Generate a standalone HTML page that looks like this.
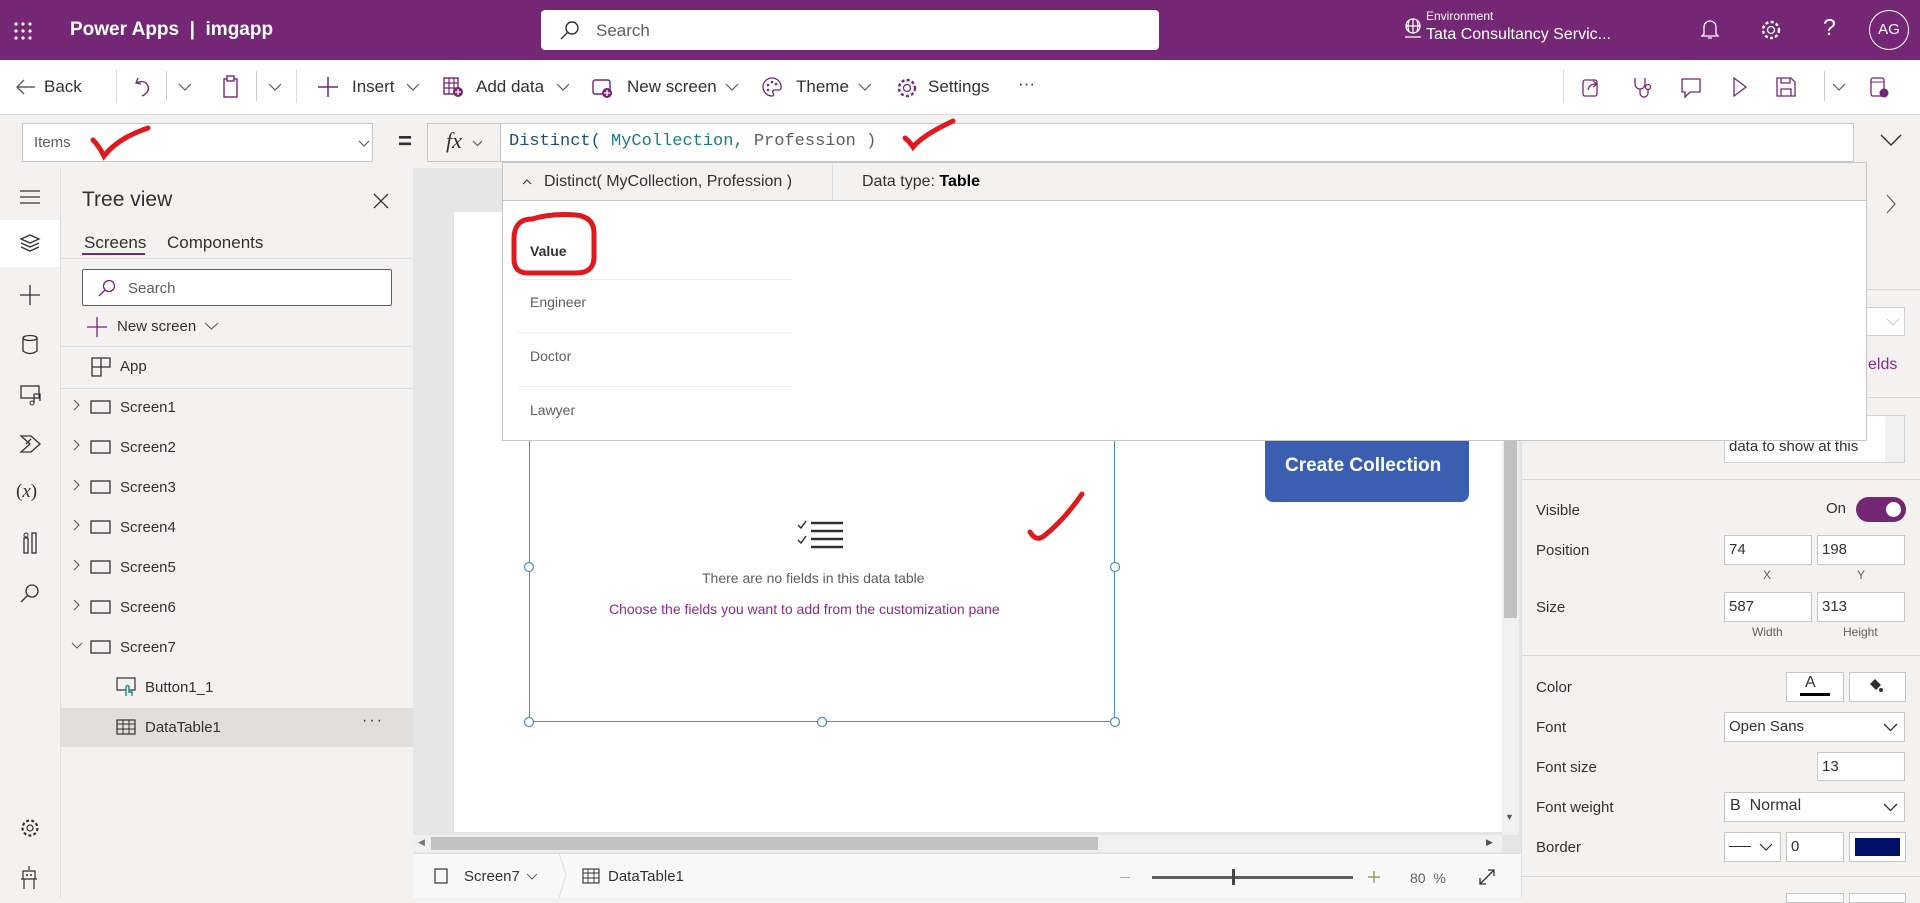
<!DOCTYPE html>
<html><head><meta charset="utf-8"><style>
*{box-sizing:border-box;margin:0;padding:0}
body{width:1920px;height:898px;overflow:hidden;position:relative;font-family:"Liberation Sans",sans-serif;color:#323130;background:#f3f2f1}
.a{position:absolute}
.t{position:absolute;white-space:nowrap}
svg{position:absolute;overflow:visible}
.box{position:absolute;background:#fff;border:1px solid #c8c6c4}
.lbl{position:absolute;left:1536px;font-size:15px;color:#323130}
.sep{position:absolute;height:1px;background:#d6d6d6}
.pop{position:absolute;left:0;top:0;width:1920px;height:898px;z-index:5;pointer-events:none}
.red{z-index:6}
</style></head><body>
<!-- header -->
<div class="a" style="left:0;top:0;width:1920px;height:60px;background:#742774"></div>
<svg style="left:14px;top:22px" width="20" height="18"><g fill="#fff"><circle cx="2" cy="2" r="1.6"/><circle cx="9" cy="2" r="1.6"/><circle cx="16" cy="2" r="1.6"/><circle cx="2" cy="9" r="1.6"/><circle cx="9" cy="9" r="1.6"/><circle cx="16" cy="9" r="1.6"/><circle cx="2" cy="16" r="1.6"/><circle cx="9" cy="16" r="1.6"/><circle cx="16" cy="16" r="1.6"/></g></svg>
<div class="t" style="left:70px;top:19px;font-size:19px;color:#fff;font-weight:bold">Power Apps &nbsp;|&nbsp; imgapp</div>
<div class="a" style="left:541px;top:10px;width:618px;height:40px;background:#fff;border-radius:4px"></div>
<svg style="left:560px;top:20px" width="20" height="20"><circle cx="12" cy="8" r="6" fill="none" stroke="#323130" stroke-width="1.4"/><line x1="8" y1="12" x2="1" y2="19" stroke="#323130" stroke-width="1.4"/></svg>
<div class="t" style="left:596px;top:21px;font-size:17px;color:#605e5c">Search</div>
<svg style="left:1403px;top:17px" width="20" height="22"><circle cx="10" cy="9" r="7" fill="none" stroke="#fff" stroke-width="1.3"/><path d="M3 9h14M10 2v14M6 4q-2 5 0 10M14 4q2 5 0 10M2 20h16" fill="none" stroke="#fff" stroke-width="1.2"/></svg>
<div class="t" style="left:1426px;top:9px;font-size:12px;color:#fff">Environment</div>
<div class="t" style="left:1426px;top:26px;font-size:16px;color:#fff">Tata Consultancy Servic...</div>
<svg style="left:1700px;top:19px" width="20" height="22"><path d="M4 15V8a6 6 0 0 1 12 0v7l2 2H2z M8 19h4" fill="none" stroke="#fff" stroke-width="1.3"/></svg>
<svg style="left:1760px;top:19px" width="22" height="22"><circle cx="11" cy="11" r="3.5" fill="none" stroke="#fff" stroke-width="1.3"/><circle cx="11" cy="11" r="8" fill="none" stroke="#fff" stroke-width="2.4" stroke-dasharray="3 2.3"/></svg>
<div class="t" style="left:1823px;top:14px;font-size:23px;color:#fff">?</div>
<div class="a" style="left:1869px;top:10px;width:40px;height:40px;border:1.5px solid #fff;border-radius:50%;color:#fff;font-size:15px;text-align:center;line-height:37px">AG</div>
<!-- toolbar -->
<div class="a" style="left:0;top:60px;width:1920px;height:55px;background:#fff;border-bottom:1px solid #dcdcdc"></div>
<div style="position:absolute;top:77px;font-size:17px;color:#323130">
<svg style="left:16px;top:2px" width="20" height="16"><path d="M19 8H2M8 1L1 8l7 7" fill="none" stroke="#605e5c" stroke-width="1.4"/></svg>
<div class="t" style="left:44px;top:0">Back</div>
<div class="a" style="left:116px;top:-8px;width:1px;height:34px;background:#ddd"></div>
<svg style="left:134px;top:0" width="18" height="20"><path d="M4 1L2 6l5 1M2 6q9-4 12 3q2 6-6 10" fill="none" stroke="#742774" stroke-width="1.4"/></svg>
<div class="a" style="left:166px;top:-6px;width:1px;height:30px;background:#ccc"></div>
<svg style="left:178px;top:6px" width="14" height="8"><path d="M1 1l6 6 6-6" fill="none" stroke="#605e5c" stroke-width="1.2"/></svg>
<svg style="left:222px;top:-2px" width="18" height="24"><rect x="2" y="4" width="13" height="18" fill="none" stroke="#742774" stroke-width="1.4"/><rect x="5" y="1" width="7" height="5" fill="#fff" stroke="#742774" stroke-width="1.4"/></svg>
<div class="a" style="left:256px;top:-6px;width:1px;height:30px;background:#ccc"></div>
<svg style="left:268px;top:6px" width="14" height="8"><path d="M1 1l6 6 6-6" fill="none" stroke="#605e5c" stroke-width="1.2"/></svg>
<div class="a" style="left:296px;top:-8px;width:1px;height:34px;background:#ddd"></div>
<svg style="left:318px;top:0" width="20" height="20"><path d="M10 0v20M0 10h20" stroke="#742774" stroke-width="1.5"/></svg>
<div class="t" style="left:352px;top:0">Insert</div>
<svg style="left:406px;top:6px" width="14" height="8"><path d="M1 1l6 6 6-6" fill="none" stroke="#605e5c" stroke-width="1.2"/></svg>
<svg style="left:443px;top:0" width="22" height="22"><rect x="1" y="1" width="14" height="16" fill="none" stroke="#742774" stroke-width="1.4"/><path d="M1 6h14M1 11h14M6 1v16M11 1v16" stroke="#742774" stroke-width="1.2"/><circle cx="15" cy="15" r="5" fill="#742774"/><path d="M15 12v6M12 15h6" stroke="#fff" stroke-width="1.3"/></svg>
<div class="t" style="left:476px;top:0">Add data</div>
<svg style="left:556px;top:6px" width="14" height="8"><path d="M1 1l6 6 6-6" fill="none" stroke="#605e5c" stroke-width="1.2"/></svg>
<svg style="left:592px;top:1px" width="22" height="22"><rect x="1" y="2" width="17" height="14" rx="2" fill="none" stroke="#742774" stroke-width="1.4"/><circle cx="15" cy="15" r="5" fill="#742774"/><path d="M15 12v6M12 15h6" stroke="#fff" stroke-width="1.3"/></svg>
<div class="t" style="left:627px;top:0">New screen</div>
<svg style="left:725px;top:6px" width="14" height="8"><path d="M1 1l6 6 6-6" fill="none" stroke="#605e5c" stroke-width="1.2"/></svg>
<svg style="left:762px;top:0" width="20" height="20"><path d="M10 1a9 9 0 1 0 0 18c2 0 2-2 1-3s0-3 2-3h4a2 2 0 0 0 2-2A9 9 0 0 0 10 1z" fill="none" stroke="#742774" stroke-width="1.3"/><circle cx="6" cy="8" r="1.3" fill="#742774"/><circle cx="10" cy="5" r="1.3" fill="#742774"/><circle cx="14" cy="7" r="1.3" fill="#742774"/><circle cx="6" cy="13" r="1.3" fill="#742774"/></svg>
<div class="t" style="left:796px;top:0">Theme</div>
<svg style="left:858px;top:6px" width="14" height="8"><path d="M1 1l6 6 6-6" fill="none" stroke="#605e5c" stroke-width="1.2"/></svg>
<svg style="left:896px;top:0" width="22" height="22"><circle cx="11" cy="11" r="3.5" fill="none" stroke="#742774" stroke-width="1.3"/><circle cx="11" cy="11" r="8" fill="none" stroke="#742774" stroke-width="2.4" stroke-dasharray="3 2.3"/></svg>
<div class="t" style="left:928px;top:0">Settings</div>
<div class="t" style="left:1018px;top:-3px">···</div>
<div class="a" style="left:1563px;top:-8px;width:1px;height:34px;background:#ddd"></div>
<svg style="left:1582px;top:0" width="20" height="20"><rect x="1" y="3" width="14" height="16" rx="2" fill="none" stroke="#742774" stroke-width="1.3"/><path d="M6 13q1-6 8-6M11 4l4 3-4 3" fill="none" stroke="#742774" stroke-width="1.3"/></svg>
<svg style="left:1633px;top:0" width="20" height="22"><path d="M2 1v6a5 5 0 0 0 10 0V1M7 12v4a4 4 0 0 0 8 0v-3" fill="none" stroke="#742774" stroke-width="1.3"/><circle cx="15" cy="10" r="2.5" fill="none" stroke="#742774" stroke-width="1.3"/></svg>
<svg style="left:1680px;top:0" width="22" height="22"><path d="M2 2h18v13H10l-5 5v-5H2z" fill="none" stroke="#742774" stroke-width="1.3"/></svg>
<svg style="left:1732px;top:0" width="16" height="20"><path d="M2 1l12 9-12 9z" fill="none" stroke="#742774" stroke-width="1.3"/></svg>
<svg style="left:1776px;top:0" width="20" height="20"><path d="M1 1h14l4 4v14H1z M5 1v5h9V1 M5 19v-7h10v7" fill="none" stroke="#742774" stroke-width="1.3"/></svg>
<div class="a" style="left:1824px;top:-6px;width:1px;height:30px;background:#ccc"></div>
<svg style="left:1832px;top:6px" width="14" height="8"><path d="M1 1l6 6 6-6" fill="none" stroke="#605e5c" stroke-width="1.2"/></svg>
<svg style="left:1870px;top:0" width="20" height="22"><rect x="1" y="1" width="13" height="18" rx="2" fill="none" stroke="#742774" stroke-width="1.3"/><path d="M1 5h13" stroke="#742774"/><circle cx="14" cy="16" r="4.5" fill="#742774"/></svg>
</div>
<!-- formula bar -->
<div class="box" style="left:22px;top:123px;width:351px;height:39px"></div>
<div class="t" style="left:34px;top:134px;font-size:15px;color:#605e5c">Items</div>
<svg style="left:358px;top:140px" width="12" height="7"><path d="M1 1l5 5 5-5" fill="none" stroke="#605e5c" stroke-width="1.2"/></svg>
<div class="t" style="left:398px;top:128px;font-size:24px;font-weight:bold">=</div>
<div class="box" style="left:427px;top:123px;width:74px;height:39px;background:#f3f2f1"></div>
<div class="t" style="left:446px;top:128px;font-size:22px;font-family:'Liberation Serif',serif;font-style:italic">fx</div>
<svg style="left:472px;top:140px" width="11" height="7"><path d="M1 1l4.5 4.5L10 1" fill="none" stroke="#605e5c" stroke-width="1.2"/></svg>
<div class="box" style="left:500px;top:123px;width:1354px;height:39px"></div>
<div class="t" style="left:509px;top:132px;font-size:17px;font-family:'Liberation Mono',monospace;color:#605e5c"><span style="color:#1f4e79">Distinct(</span> <span style="color:#1b7c83">MyCollection,</span> Profession )</div>
<svg style="left:1880px;top:134px" width="22" height="13"><path d="M1 1l10 10L21 1" fill="none" stroke="#323130" stroke-width="1.4"/></svg>
<!-- left rail -->
<div class="a" style="left:0;top:168px;width:61px;height:730px;background:#f3f2f1;border-right:1px solid #e1dfdd"></div>
<div class="a" style="left:0;top:220px;width:60px;height:47px;background:#fff"></div>
<svg style="left:20px;top:190px" width="20" height="14"><path d="M0 1h20M0 7h20M0 13h20" stroke="#323130" stroke-width="1.2"/></svg>
<svg style="left:20px;top:234px" width="20" height="18"><path d="M10 1l9 4-9 4-9-4z M1 9l9 4 9-4 M1 13l9 4 9-4" fill="none" stroke="#323130" stroke-width="1.3"/></svg>
<svg style="left:20px;top:285px" width="20" height="20"><path d="M10 0v20M0 10h20" stroke="#323130" stroke-width="1.3"/></svg>
<svg style="left:22px;top:335px" width="16" height="20"><ellipse cx="8" cy="3" rx="7" ry="2.5" fill="none" stroke="#323130" stroke-width="1.3"/><path d="M1 3v13q7 5 14 0V3" fill="none" stroke="#323130" stroke-width="1.3"/></svg>
<svg style="left:20px;top:385px" width="22" height="20"><rect x="1" y="1" width="18" height="12" fill="none" stroke="#323130" stroke-width="1.3"/><path d="M14 9v9M14 9h6v7" fill="none" stroke="#323130" stroke-width="1.3"/><circle cx="12" cy="18" r="2" fill="none" stroke="#323130"/></svg>
<svg style="left:20px;top:435px" width="22" height="18"><path d="M1 1h10l9 8-9 8H1l9-8z M6 9l5-5" fill="none" stroke="#323130" stroke-width="1.3"/></svg>
<div class="t" style="left:16px;top:481px;font-size:19px;font-family:'Liberation Serif',serif">(<i>x</i>)</div>
<svg style="left:22px;top:532px" width="16" height="22"><rect x="2" y="6" width="4" height="15" fill="none" stroke="#323130" stroke-width="1.3"/><rect x="10" y="1" width="4" height="20" fill="none" stroke="#323130" stroke-width="1.3"/><circle cx="4" cy="3" r="2" fill="none" stroke="#323130"/></svg>
<svg style="left:20px;top:583px" width="20" height="20"><circle cx="12" cy="8" r="6" fill="none" stroke="#323130" stroke-width="1.3"/><line x1="8" y1="12" x2="1" y2="19" stroke="#323130" stroke-width="1.3"/></svg>
<svg style="left:20px;top:818px" width="20" height="20"><circle cx="10" cy="10" r="3" fill="none" stroke="#323130" stroke-width="1.2"/><circle cx="10" cy="10" r="7.5" fill="none" stroke="#323130" stroke-width="2.2" stroke-dasharray="3 2.2"/></svg>
<svg style="left:20px;top:866px" width="18" height="24"><path d="M9 0v4M3 5h12v8H3z M1 13h16M4 13v10M14 13v10" fill="none" stroke="#323130" stroke-width="1.2"/><circle cx="7" cy="9" r="1" fill="#323130"/><circle cx="11" cy="9" r="1" fill="#323130"/></svg>
<!-- tree panel -->
<div class="a" style="left:61px;top:168px;width:352px;height:730px;background:#f3f2f1"></div>
<div class="t" style="left:82px;top:188px;font-size:21px;color:#323130">Tree view</div>
<svg style="left:373px;top:193px" width="16" height="16"><path d="M1 1l14 14M15 1L1 15" stroke="#323130" stroke-width="1.3"/></svg>
<div class="t" style="left:84px;top:233px;font-size:17px">Screens</div>
<div class="a" style="left:82px;top:253px;width:63px;height:2px;background:#742774"></div>
<div class="t" style="left:167px;top:233px;font-size:17px;color:#323130">Components</div>
<div class="sep" style="left:61px;top:258px;width:352px;background:#dcdcdc"></div>
<div class="a" style="left:82px;top:269px;width:310px;height:37px;background:#fff;border:1px solid #605e5c;border-radius:2px"></div>
<svg style="left:98px;top:279px" width="18" height="18"><circle cx="11" cy="7" r="5.5" fill="none" stroke="#742774" stroke-width="1.3"/><line x1="7" y1="11" x2="1" y2="17" stroke="#742774" stroke-width="1.3"/></svg>
<div class="t" style="left:128px;top:280px;font-size:15px;color:#605e5c">Search</div>
<svg style="left:87px;top:317px" width="20" height="20"><path d="M10 0v20M0 10h20" stroke="#742774" stroke-width="1.3"/></svg>
<div class="t" style="left:117px;top:318px;font-size:15px">New screen</div>
<svg style="left:204px;top:322px" width="15" height="8"><path d="M1 1l6.5 6L14 1" fill="none" stroke="#605e5c" stroke-width="1.1"/></svg>
<div class="sep" style="left:61px;top:346px;width:352px;background:#dcdcdc"></div>
<svg style="left:91px;top:357px" width="20" height="20"><path d="M1 1h18v9H10v9H1z M10 1v9M1 10h9" fill="none" stroke="#323130" stroke-width="1.3"/></svg>
<div class="t" style="left:120px;top:358px;font-size:15px">App</div>
<div class="sep" style="left:61px;top:388px;width:352px;background:#dcdcdc"></div>
<div style="position:absolute;left:0;top:0;font-size:15px">
<div class="t" style="left:120px;top:399px">Screen1</div><div class="t" style="left:120px;top:439px">Screen2</div><div class="t" style="left:120px;top:479px">Screen3</div><div class="t" style="left:120px;top:519px">Screen4</div><div class="t" style="left:120px;top:559px">Screen5</div><div class="t" style="left:120px;top:599px">Screen6</div><div class="t" style="left:120px;top:639px">Screen7</div>
</div>
<svg style="left:72px;top:400px" width="60" height="260"><g fill="none" stroke="#605e5c" stroke-width="1.1"><path d="M2 0l5 5-5 5M2 40l5 5-5 5M2 80l5 5-5 5M2 120l5 5-5 5M2 160l5 5-5 5M2 200l5 5-5 5M0 243l5 5 5-5"/></g><g fill="none" stroke="#323130" stroke-width="1.3"><rect x="19" y="1" width="19" height="12"/><rect x="19" y="41" width="19" height="12"/><rect x="19" y="81" width="19" height="12"/><rect x="19" y="121" width="19" height="12"/><rect x="19" y="161" width="19" height="12"/><rect x="19" y="201" width="19" height="12"/><rect x="19" y="241" width="19" height="12"/></g></svg>
<svg style="left:116px;top:677px" width="22" height="20"><rect x="1" y="1" width="18" height="12" fill="none" stroke="#323130" stroke-width="1.2"/><path d="M10 19v-9a1.5 1.5 0 0 1 3 0v5h3v4" fill="#f3f2f1" stroke="#1b8a8a" stroke-width="1.4"/></svg>
<div class="t" style="left:145px;top:679px;font-size:15px">Button1_1</div>
<div class="a" style="left:61px;top:708px;width:352px;height:39px;background:#e1dfdd"></div>
<svg style="left:116px;top:719px" width="20" height="16"><rect x="1" y="1" width="18" height="14" fill="none" stroke="#323130" stroke-width="1.2"/><path d="M1 5h18M1 10h18M7 1v14M13 1v14" stroke="#323130" stroke-width="1"/></svg>
<div class="t" style="left:145px;top:719px;font-size:15px">DataTable1</div>
<div class="t" style="left:362px;top:712px;font-size:16px;letter-spacing:2px">···</div>
<!-- canvas area -->
<div class="a" style="left:413px;top:168px;width:1108px;height:689px;background:#e6e6e6"></div>
<div class="a" style="left:454px;top:212px;width:1048px;height:620px;background:#fff"></div>
<div class="a" style="left:1502px;top:168px;width:17px;height:667px;background:#f0f0f0"></div>
<div class="a" style="left:1504px;top:416px;width:13px;height:202px;background:#c1c1c1"></div>
<div class="t" style="left:1505px;top:812px;font-size:9px;color:#555">▼</div>
<div class="a" style="left:413px;top:835px;width:1089px;height:17px;background:#f0f0f0"></div>
<div class="a" style="left:431px;top:837px;width:667px;height:13px;background:#c1c1c1"></div>
<div class="t" style="left:418px;top:837px;font-size:9px;color:#777">◀</div>
<div class="t" style="left:1486px;top:837px;font-size:9px;color:#555">▶</div>
<div class="a" style="left:413px;top:853px;width:1108px;height:45px;background:#f8f8f8;border-top:1px solid #e1dfdd"></div>
<svg style="left:434px;top:868px" width="14" height="16"><rect x="1" y="1" width="12" height="14" fill="none" stroke="#323130" stroke-width="1.2"/></svg>
<div class="t" style="left:464px;top:868px;font-size:15px">Screen7</div>
<svg style="left:526px;top:873px" width="12" height="7"><path d="M1 1l5 5 5-5" fill="none" stroke="#605e5c"/></svg>
<svg style="left:558px;top:853px" width="10" height="45"><path d="M1 0l7 22-7 23" fill="none" stroke="#dcdcdc"/></svg>
<svg style="left:582px;top:868px" width="18" height="16"><rect x="1" y="1" width="16" height="14" fill="none" stroke="#323130" stroke-width="1.1"/><path d="M1 5h16M1 10h16M6 1v14M12 1v14" stroke="#323130" stroke-width="0.9"/></svg>
<div class="t" style="left:608px;top:868px;font-size:15px">DataTable1</div>
<div class="a" style="left:1120px;top:877px;width:10px;height:1px;background:#aaa"></div>
<div class="a" style="left:1152px;top:876px;width:201px;height:3px;background:#605e5c"></div>
<div class="a" style="left:1232px;top:869px;width:3px;height:16px;background:#484644"></div>
<svg style="left:1368px;top:871px" width="12" height="12"><path d="M6 0v12M0 6h12" stroke="#8a8a4a" stroke-width="1.2"/></svg>
<div class="t" style="left:1410px;top:870px;font-size:14px;color:#605e5c">80 &nbsp;%</div>
<svg style="left:1478px;top:868px" width="18" height="18"><path d="M2 16L16 2M2 10v6h6M10 2h6v6" fill="none" stroke="#323130" stroke-width="1.3"/></svg>
<!-- data table -->
<div class="a" style="left:529px;top:430px;width:586px;height:292px;border:1px solid #4a90c8;border-top:none"></div>
<svg style="left:523px;top:560px" width="600" height="170"><g fill="#fff" stroke="#4a90c8" stroke-width="1.2"><circle cx="6" cy="7" r="4.5"/><circle cx="592" cy="7" r="4.5"/><circle cx="6" cy="162" r="4.5"/><circle cx="299" cy="162" r="4.5"/><circle cx="592" cy="162" r="4.5"/></g></svg>
<svg style="left:797px;top:520px" width="48" height="32"><path d="M1 5l3 3 5-7M1 20l3 3 5-7" fill="none" stroke="#323130" stroke-width="1.5"/><path d="M14 3h32M14 11h32M14 19h32M14 27h32" stroke="#323130" stroke-width="2.4"/></svg>
<div class="t" style="left:702px;top:570px;font-size:14px;color:#605e5c">There are no fields in this data table</div>
<div class="t" style="left:609px;top:601px;font-size:14px;color:#8b2b8b">Choose the fields you want to add from the customization pane</div>
<div class="a" style="left:1265px;top:420px;width:204px;height:82px;background:#3a5fb0;border-radius:8px"></div>
<div class="t" style="left:1285px;top:455px;font-size:19px;color:#fff;font-weight:bold">Create Collection</div>
<!-- right panel -->
<div class="a" style="left:1521px;top:168px;width:399px;height:730px;background:#f3f2f1;border-left:1px solid #e1dfdd"></div>
<div class="a" style="left:1867px;top:115px;width:53px;height:53px;background:#f3f2f1"></div>
<svg style="left:1880px;top:134px" width="22" height="13"><path d="M1 1l10 10L21 1" fill="none" stroke="#323130" stroke-width="1.4"/></svg>
<svg style="left:1886px;top:194px" width="10" height="20"><path d="M1 1l8 9-8 9" fill="none" stroke="#605e5c" stroke-width="1.2"/></svg>
<div class="sep" style="left:1521px;top:289px;width:399px"></div>
<div class="box" style="left:1800px;top:307px;width:105px;height:29px;border-color:#d0d0d0"></div>
<svg style="left:1886px;top:318px" width="14" height="8"><path d="M1 1l6 6 6-6" fill="none" stroke="#c8c8c8"/></svg>
<div class="t" style="left:1868px;top:356px;font-size:16px;color:#8b2b8b">elds</div>
<div class="sep" style="left:1521px;top:397px;width:399px"></div>
<div class="box" style="left:1724px;top:415px;width:181px;height:48px;border-color:#d0d0d0"></div>
<div class="a" style="left:1885px;top:416px;width:19px;height:46px;background:#f0f0f0"></div>
<div class="t" style="left:1729px;top:438px;font-size:15px">data to show at this</div>
<div class="sep" style="left:1521px;top:479px;width:399px"></div>
<div class="lbl" style="top:502px">Visible</div>
<div class="t" style="left:1826px;top:500px;font-size:15px">On</div>
<div class="a" style="left:1856px;top:497px;width:50px;height:25px;background:#742774;border-radius:13px"></div>
<div class="a" style="left:1886px;top:502px;width:15px;height:15px;background:#fff;border-radius:50%"></div>
<div class="lbl" style="top:542px">Position</div>
<div class="box" style="left:1724px;top:535px;width:88px;height:30px"></div><div class="t" style="left:1729px;top:541px;font-size:15px">74</div>
<div class="box" style="left:1817px;top:535px;width:88px;height:30px"></div><div class="t" style="left:1822px;top:541px;font-size:15px">198</div>
<div class="t" style="left:1763px;top:568px;font-size:12px;color:#605e5c">X</div><div class="t" style="left:1857px;top:568px;font-size:12px;color:#605e5c">Y</div>
<div class="lbl" style="top:599px">Size</div>
<div class="box" style="left:1724px;top:592px;width:88px;height:30px"></div><div class="t" style="left:1729px;top:598px;font-size:15px">587</div>
<div class="box" style="left:1817px;top:592px;width:88px;height:30px"></div><div class="t" style="left:1822px;top:598px;font-size:15px">313</div>
<div class="t" style="left:1752px;top:625px;font-size:12px;color:#605e5c">Width</div><div class="t" style="left:1843px;top:625px;font-size:12px;color:#605e5c">Height</div>
<div class="sep" style="left:1521px;top:655px;width:399px"></div>
<div class="lbl" style="top:679px">Color</div>
<div class="box" style="left:1786px;top:672px;width:58px;height:30px"></div>
<div class="t" style="left:1805px;top:674px;font-size:16px">A</div><div class="a" style="left:1800px;top:693px;width:30px;height:3px;background:#000"></div>
<div class="box" style="left:1849px;top:672px;width:57px;height:30px"></div>
<svg style="left:1868px;top:677px" width="16" height="16"><path d="M2 7l5-5 6 6-5 5z" fill="#323130"/><circle cx="13" cy="13" r="2" fill="#323130"/></svg>
<div class="lbl" style="top:719px">Font</div>
<div class="box" style="left:1724px;top:712px;width:181px;height:30px"></div><div class="t" style="left:1729px;top:718px;font-size:15px">Open Sans</div>
<svg style="left:1883px;top:723px" width="15" height="9"><path d="M1 1l6.5 6.5L14 1" fill="none" stroke="#323130" stroke-width="1.3"/></svg>
<div class="lbl" style="top:759px">Font size</div>
<div class="box" style="left:1817px;top:752px;width:88px;height:29px"></div><div class="t" style="left:1822px;top:758px;font-size:15px">13</div>
<div class="lbl" style="top:799px">Font weight</div>
<div class="box" style="left:1724px;top:792px;width:181px;height:30px"></div><div class="t" style="left:1730px;top:797px;font-size:16px">B&nbsp; Normal</div>
<svg style="left:1883px;top:803px" width="15" height="9"><path d="M1 1l6.5 6.5L14 1" fill="none" stroke="#323130" stroke-width="1.3"/></svg>
<div class="lbl" style="top:839px">Border</div>
<div class="box" style="left:1724px;top:832px;width:57px;height:30px"></div>
<div class="a" style="left:1729px;top:846px;width:22px;height:1px;background:#323130"></div>
<svg style="left:1759px;top:843px" width="14" height="8"><path d="M1 1l6 6 6-6" fill="none" stroke="#323130" stroke-width="1.2"/></svg>
<div class="box" style="left:1786px;top:832px;width:58px;height:30px"></div><div class="t" style="left:1791px;top:838px;font-size:15px">0</div>
<div class="box" style="left:1849px;top:832px;width:57px;height:30px"></div>
<div class="a" style="left:1855px;top:838px;width:45px;height:18px;background:#001069"></div>
<div class="sep" style="left:1521px;top:876px;width:399px"></div>
<div class="box" style="left:1786px;top:893px;width:58px;height:10px"></div><div class="box" style="left:1849px;top:893px;width:57px;height:10px"></div>
<!-- popup (on top) -->
<div class="pop">
<div class="a" style="left:502px;top:162px;width:1365px;height:279px;background:#fff;border:1px solid #c8c6c4"></div>
<div class="a" style="left:503px;top:163px;width:1363px;height:38px;background:#f3f2f1;border-bottom:1px solid #c8c6c4"></div>
<svg style="left:522px;top:179px" width="10" height="6"><path d="M1 5l4-4 4 4" fill="none" stroke="#323130"/></svg>
<div class="t" style="left:544px;top:173px;font-size:16px">Distinct( MyCollection, Profession )</div>
<div class="a" style="left:832px;top:163px;width:1px;height:37px;background:#ddd"></div>
<div class="t" style="left:862px;top:173px;font-size:16px">Data type: <b style="color:#000">Table</b></div>
<div class="t" style="left:530px;top:243px;font-size:14px;font-weight:bold">Value</div>
<div class="sep" style="left:518px;top:279px;width:274px;background:#ececec"></div>
<div class="t" style="left:530px;top:294px;font-size:14px;color:#605e5c">Engineer</div>
<div class="sep" style="left:518px;top:332px;width:274px;background:#ececec"></div>
<div class="t" style="left:530px;top:348px;font-size:14px;color:#605e5c">Doctor</div>
<div class="sep" style="left:518px;top:386px;width:274px;background:#ececec"></div>
<div class="t" style="left:530px;top:402px;font-size:14px;color:#605e5c">Lawyer</div>
</div>
<!-- red annotations -->
<svg class="red" style="left:0;top:0" width="1920" height="898"><g fill="none" stroke="#e0191f" stroke-width="5" stroke-linecap="round">
<path d="M93 140q6 6 11 16q14-18 44-28"/>
<path d="M905 138q5 4 8 9q10-12 40-26"/>
<path d="M1030 532q6 10 14 4q20-16 38-42"/>
<path d="M532 219q-18 0-18 20v20q0 14 14 14h48q18 0 18-16v-24q0-16-18-18q-24-2-44 4"/>
</g></svg>
</body></html>
